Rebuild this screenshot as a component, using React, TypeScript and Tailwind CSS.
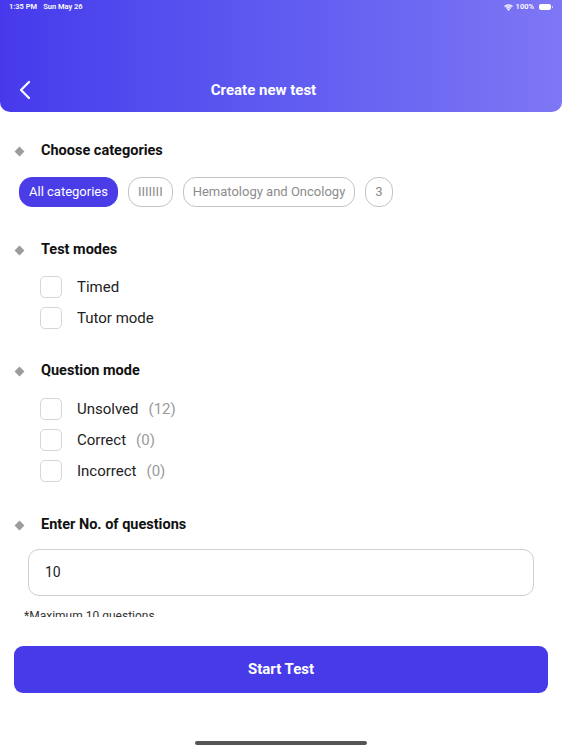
import React from "react";

const Bullet = () => (
  <span className="flex w-[41px] shrink-0 items-center pl-[16px]">
    <span className="block h-[7px] w-[7px] rotate-45 bg-[#9c9c9c]" />
  </span>
);

const SectionTitle = ({ title }: { title: string }) => (
  <div className="flex h-[20px] items-center">
    <Bullet />
    <span className="text-[14.5px] font-bold leading-[20px] text-[#111]">{title}</span>
  </div>
);

const CheckRow = ({ label, count }: { label: string; count?: number }) => (
  <div className="flex h-[22px] items-center pl-[40px]">
    <span className="block h-[22px] w-[22px] rounded-[5px] border border-[#d6d6d6] bg-white" />
    <span className="ml-[15px] text-[15px] leading-[22px] text-[#222]">{label}</span>
    {count !== undefined && (
      <span className="ml-[10px] text-[15px] leading-[22px] text-[#9a9a9a]">({count})</span>
    )}
  </div>
);

const chips = ["All categories", "IIIIIII", "Hematology and Oncology", "3"];

export default function App() {
  return (
    <div
      className="flex h-[750px] w-[562px] flex-col overflow-hidden bg-white"
      style={{ fontFamily: "Roboto, 'Liberation Sans', sans-serif" }}
    >
      {/* Header */}
      <div className="flex h-[112px] shrink-0 flex-col rounded-b-[10px] bg-gradient-to-r from-[#4639ec] to-[#7e76f4] text-white">
        <div className="flex h-[13px] items-center justify-between px-[9px] pt-[1px] text-[7.5px] font-semibold">
          <span>
            1:35 PM<span className="ml-[6px]">Sun May 26</span>
          </span>
          <span className="flex items-center gap-[3px]">
            <svg width="9" height="7" viewBox="0 0 12 9" fill="white">
              <path d="M6 9 4.2 6.9a2.7 2.7 0 0 1 3.6 0Z M2.9 5.4a4.6 4.6 0 0 1 6.2 0l-.9 1A3.3 3.3 0 0 0 3.8 6.4Z M1.5 3.9a6.6 6.6 0 0 1 9 0l-.9 1a5.3 5.3 0 0 0-7.2 0Z M0 2.4a8.7 8.7 0 0 1 12 0l-.9 1a7.4 7.4 0 0 0-10.2 0Z" />
            </svg>
            <span>100%</span>
            <span className="ml-[2px] flex items-center">
              <span className="block h-[6px] w-[12px] rounded-[2px] bg-white" />
              <span className="ml-[1px] block h-[2px] w-[1px] bg-white/60" />
            </span>
          </span>
        </div>
        <div className="mt-[64px] flex h-[26px] items-center">
          <div className="flex w-[48px] items-center pl-[18px]">
            <svg width="14" height="20" viewBox="0 0 14 20" fill="none">
              <path d="M11 2 3 10l8 8" stroke="white" strokeWidth="2.2" strokeLinecap="round" strokeLinejoin="round" />
            </svg>
          </div>
          <div className="flex-1 text-center text-[15px] font-bold">Create new test</div>
          <div className="w-[83px]" />
        </div>
      </div>

      {/* Scroll content */}
      <div className="h-[505px] shrink-0 overflow-hidden">
        <div className="flex flex-col pt-[29px]">
          <SectionTitle title="Choose categories" />
          <div className="mt-[16px] flex items-center gap-[10px] pl-[19px]">
            {chips.map((c, i) => (
              <span
                key={c}
                className={
                  i === 0
                    ? "flex h-[30px] items-center rounded-[13px] border border-[#4a3de8] bg-[#4a3de8] px-[9px] text-[13px] text-white"
                    : "flex h-[30px] items-center rounded-[13px] border border-[#c4c4c4] bg-white px-[9px] text-[13px] text-[#8c8c8c]"
                }
              >
                {c}
              </span>
            ))}
          </div>

          <div className="mt-[33px]">
            <SectionTitle title="Test modes" />
          </div>
          <div className="mt-[16px] flex flex-col gap-[9px]">
            <CheckRow label="Timed" />
            <CheckRow label="Tutor mode" />
          </div>

          <div className="mt-[32px]">
            <SectionTitle title="Question mode" />
          </div>
          <div className="mt-[17px] flex flex-col gap-[9px]">
            <CheckRow label="Unsolved" count={12} />
            <CheckRow label="Correct" count={0} />
            <CheckRow label="Incorrect" count={0} />
          </div>

          <div className="mt-[33px]">
            <SectionTitle title="Enter No. of questions" />
          </div>
          <div className="mt-[14px] px-[28px]">
            <div className="flex h-[47px] items-center rounded-[11px] border border-[#cfcfcf] px-[16px] text-[14px] text-[#222]">
              10
            </div>
          </div>
          <div className="mt-[13px] pl-[24px] text-[12px] leading-[14px] text-[#333]">*Maximum 10 questions</div>
        </div>
      </div>

      {/* Footer */}
      <div className="flex flex-1 flex-col items-center">
        <button className="mt-[29px] flex h-[47px] w-[534px] items-center justify-center rounded-[9px] bg-[#473be9] text-[15px] font-bold text-white">
          Start Test
        </button>
        <div className="mt-[48px] h-[4px] w-[172px] rounded-full bg-[#555]" />
      </div>
    </div>
  );
}
